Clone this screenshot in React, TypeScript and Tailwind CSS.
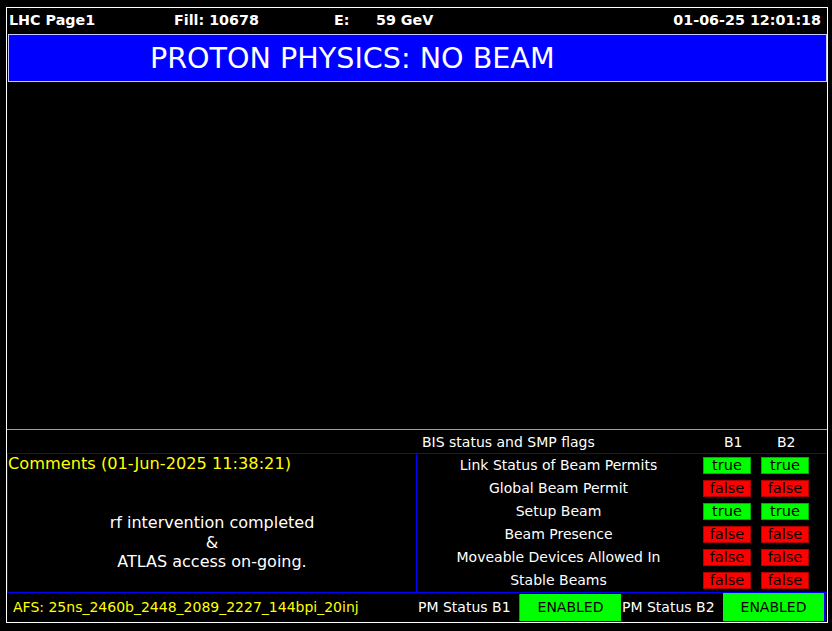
const rows: { label: string; b1: boolean; b2: boolean }[] = [
  { label: 'Link Status of Beam Permits', b1: true, b2: true },
  { label: 'Global Beam Permit', b1: false, b2: false },
  { label: 'Setup Beam', b1: true, b2: true },
  { label: 'Beam Presence', b1: false, b2: false },
  { label: 'Moveable Devices Allowed In', b1: false, b2: false },
  { label: 'Stable Beams', b1: false, b2: false },
]

function Flag({ value }: { value: boolean }) {
  return (
    <div
      className={
        value
          ? 'flex h-[17px] w-[48px] items-center justify-center border border-[#00b000] bg-[#00ff00] text-[14.5px] leading-none text-black'
          : 'flex h-[17px] w-[48px] items-center justify-center border border-[#b00000] bg-[#ff0000] text-[14.5px] leading-none text-black'
      }
    >
      {value ? 'true' : 'false'}
    </div>
  )
}

export default function App() {
  return (
    <div className="relative h-[631px] w-[832px] overflow-hidden bg-black font-['DejaVu_Sans',sans-serif] text-white">
      <div className="ml-[6px] mt-[7px] flex h-[616px] w-[822px] flex-col border border-white">
        {/* header */}
        <div className="flex h-[26px] items-center text-[14.3px] font-bold">
          <div className="w-[167px] pl-[2px]">LHC Page1</div>
          <div className="w-[160px]">Fill: 10678</div>
          <div className="w-[42px]">E:</div>
          <div className="flex-1">59 GeV</div>
          <div className="pr-[6px]">01-06-25 12:01:18</div>
        </div>

        {/* mode banner */}
        <div className="ml-[1px] flex h-[48px] w-[819px] items-center border border-[#c8c8ff] bg-[#0000ff] pl-[141px] text-[28.6px] leading-none">
          PROTON PHYSICS: NO BEAM
        </div>

        <div className="flex-1" />

        {/* BIS header */}
        <div className="flex h-[24px] items-center border-t border-[#a0a0a0] pt-[1px] text-[14px]">
          <div className="w-[415px]" />
          <div className="w-[302px]">BIS status and SMP flags</div>
          <div className="w-[53px]">B1</div>
          <div>B2</div>
        </div>

        {/* comments + flags */}
        <div className="flex h-[140px] border-y border-[#0000ff]">
          <div className="w-[410px] border-x border-[#0000ff]">
            <div className="text-[16.2px] leading-[19px] text-[#ffff00]">Comments (01-Jun-2025 11:38:21)</div>
            <div className="mt-[40px] text-center text-[16px] leading-[19.5px]">
              <div>rf intervention completed</div>
              <div>&amp;</div>
              <div>ATLAS access on-going.</div>
            </div>
          </div>
          <div className="flex flex-1 flex-col">
            {rows.map((r) => (
              <div key={r.label} className="flex h-[23px] items-center">
                <div className="w-[283px] text-center text-[14px]">{r.label}</div>
                <div className="ml-[3px]">
                  <Flag value={r.b1} />
                </div>
                <div className="ml-[10px]">
                  <Flag value={r.b2} />
                </div>
              </div>
            ))}
          </div>
        </div>

        {/* footer */}
        <div className="flex h-[29px] items-center text-[14px]">
          <div className="w-[410px] pl-[6px] text-[#ffff00]">AFS: 25ns_2460b_2448_2089_2227_144bpi_20inj</div>
          <div className="w-[102px] pl-[1px]">PM Status B1</div>
          <div className="flex h-[27px] w-[102px] items-center justify-center border-l border-[#00b000] bg-[#00ff00] text-black">
            ENABLED
          </div>
          <div className="w-[102px] pl-[1px]">PM Status B2</div>
          <div className="flex h-[29px] w-[103px] items-center justify-center border-b border-r-2 border-[#0000ff] bg-[#00ff00] text-black">
            ENABLED
          </div>
        </div>
      </div>
    </div>
  )
}
